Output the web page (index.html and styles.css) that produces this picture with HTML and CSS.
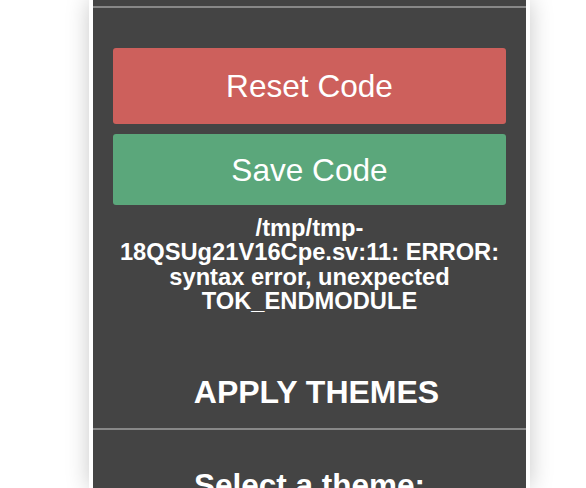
FILE: index.html
```html
<!DOCTYPE html>
<html>
<head>
<meta charset="utf-8">
<link rel="stylesheet" href="styles.css">
</head>
<body>
<div class="frame">
  <div class="panel">
    <div class="stub"></div>
    <section class="code-section">
      <button class="btn btn-reset">Reset Code</button>
      <button class="btn btn-save">Save Code</button>
      <p class="error">/tmp/tmp-18QSUg21V16Cpe.sv:11: ERROR: syntax error, unexpected TOK_ENDMODULE</p>
      <h2 class="section-title">APPLY THEMES</h2>
    </section>
    <section class="theme-section">
      <h3 class="theme-label">Select a theme:</h3>
    </section>
  </div>
</div>
</body>
</html>
```
FILE: styles.css
```css
html, body {
  margin: 0;
  padding: 0;
  background: #ffffff;
  height: 100%;
  overflow: hidden;
}
body {
  font-family: "Liberation Sans", Arial, sans-serif;
}
.frame {
  margin-left: 89px;
  width: 433px;
  padding: 0 4px;
  height: 100%;
  background: #ffffff;
  box-shadow: 0 0 22px rgba(0, 0, 0, 0.22);
}
.panel {
  background: #444444;
  height: 100%;
  color: #ffffff;
}
.stub {
  height: 6px;
  border-bottom: 2px solid #888888;
}
.code-section {
  padding: 40px 20px 0;
  display: flex;
  flex-direction: column;
  border-bottom: 2px solid #888888;
}
.btn {
  border: none;
  border-radius: 3px;
  color: #ffffff;
  font-family: "Liberation Sans", Arial, sans-serif;
  font-size: 31.6px;
  line-height: 36px;
  padding: 0;
  cursor: pointer;
}
.btn-reset {
  background: #cd605c;
  height: 76px;
}
.btn-save {
  background: #5ba77b;
  height: 71px;
  margin-top: 10px;
}
.error {
  margin: 11px 4px 0;
  text-align: center;
  font-weight: bold;
  font-size: 23.7px;
  line-height: 24.3px;
}
.section-title {
  margin: 61px 0 18px;
  padding-left: 14px;
  text-align: center;
  font-size: 32px;
  line-height: 36px;
  font-weight: bold;
}
.theme-section {
  padding-top: 37px;
}
.theme-label {
  margin: 0;
  text-align: center;
  font-size: 31.5px;
  line-height: 36px;
  font-weight: bold;
}
```
